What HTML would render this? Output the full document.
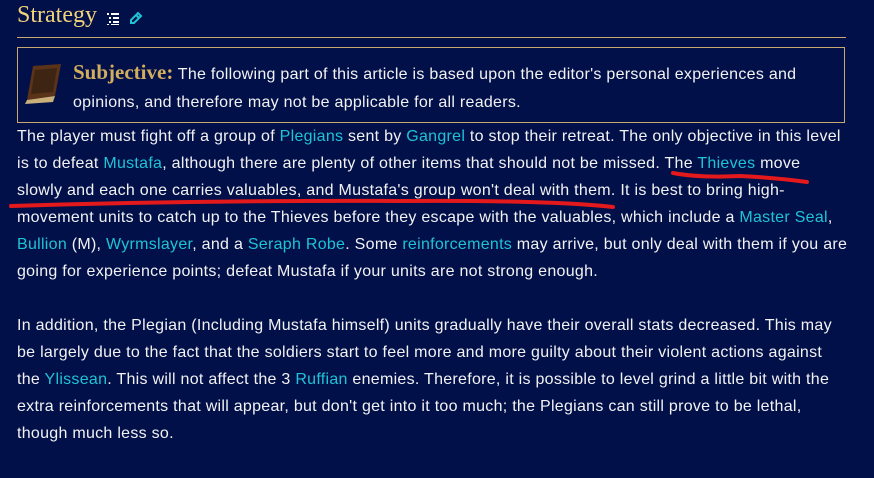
<!DOCTYPE html><html><head><style>
body{margin:0;width:874px;height:478px;background:#02104a;overflow:hidden;font-family:"Liberation Sans",sans-serif;color:#f2f2f2;position:relative}
.h{position:absolute;left:17px;top:2px;font-family:"Liberation Serif",serif;font-size:24px;color:#f0d37a}
.hr{position:absolute;left:17px;top:37px;width:829px;height:1px;background:#c9a870}
.box{position:absolute;left:17px;top:47px;width:826px;height:74px;border:1px solid #c9a870}
.l{position:absolute;left:17px;font-size:16px;letter-spacing:.28px;white-space:nowrap;line-height:20px}
a{color:#1ec3d6;text-decoration:none}
.sub{font-family:"Liberation Serif",serif;font-weight:bold;font-size:21px;color:#d2ad5e;letter-spacing:0}
</style></head><body>
<div class="h">Strategy</div>
<svg style="position:absolute;left:107px;top:13px" width="12" height="12"><g fill="#fff"><rect x="0" y="0" width="2" height="2"/><rect x="4" y="0" width="8" height="2"/><rect x="2" y="4" width="2" height="2"/><rect x="6" y="4" width="6" height="2"/><rect x="2" y="8" width="2" height="2"/><rect x="6" y="8" width="6" height="2"/><rect x="0" y="11" width="2" height="1"/><rect x="4" y="11" width="8" height="1"/></g></svg>
<svg style="position:absolute;left:129px;top:11px" width="14" height="14"><path d="M2 12 L2 9 L9 2 L12 5 L5 12 Z M7 4 L10 7" fill="none" stroke="#1ec3d6" stroke-width="2"/></svg>
<div class="hr"></div>
<div class="box"></div>
<svg style="position:absolute;left:23px;top:62px" width="40" height="42"><path d="M10 4 L38 2 L32 34 L4 38 Z" fill="#5a3318"/><path d="M4 38 L32 34 L30 40 L2 42 Z" fill="#c9b07a"/><path d="M12 8 L34 6 L30 30 L8 32 Z" fill="#2c1a10" opacity=".6"/></svg>
<div class="l" style="left:73px;top:62px"><span class="sub">Subjective:</span> The following part of this article is based upon the editor's personal experiences and</div>
<div class="l" style="left:73px;top:93px">opinions, and therefore may not be applicable for all readers.</div>
<div class="l" style="top:127px">The player must fight off a group of <a>Plegians</a> sent by <a>Gangrel</a> to stop their retreat. The only objective in this level</div>
<div class="l" style="top:154px">is to defeat <a>Mustafa</a>, although there are plenty of other items that should not be missed. The <a>Thieves</a> move</div>
<div class="l" style="top:181px">slowly and each one carries valuables, and Mustafa's group won't deal with them. It is best to bring high-</div>
<div class="l" style="top:208px">movement units to catch up to the Thieves before they escape with the valuables, which include a <a>Master Seal</a>,</div>
<div class="l" style="top:235px"><a>Bullion</a> (M), <a>Wyrmslayer</a>, and a <a>Seraph Robe</a>. Some <a>reinforcements</a> may arrive, but only deal with them if you are</div>
<div class="l" style="top:262px">going for experience points; defeat Mustafa if your units are not strong enough.</div>
<div class="l" style="top:316px">In addition, the Plegian (Including Mustafa himself) units gradually have their overall stats decreased. This may</div>
<div class="l" style="top:343px">be largely due to the fact that the soldiers start to feel more and more guilty about their violent actions against</div>
<div class="l" style="top:370px">the <a>Ylissean</a>. This will not affect the 3 <a>Ruffian</a> enemies. Therefore, it is possible to level grind a little bit with the</div>
<div class="l" style="top:397px">extra reinforcements that will appear, but don't get into it too much; the Plegians can still prove to be lethal,</div>
<div class="l" style="top:424px">though much less so.</div>
<svg style="position:absolute;left:0;top:0" width="874" height="478"><path d="M673 173 Q700 178 740 176 Q780 178 807 182" fill="none" stroke="#e3191c" stroke-width="4" stroke-linecap="round"/><path d="M11 206 Q200 200 400 201 Q550 200 613 207" fill="none" stroke="#e3191c" stroke-width="4" stroke-linecap="round"/></svg>
</body></html>
